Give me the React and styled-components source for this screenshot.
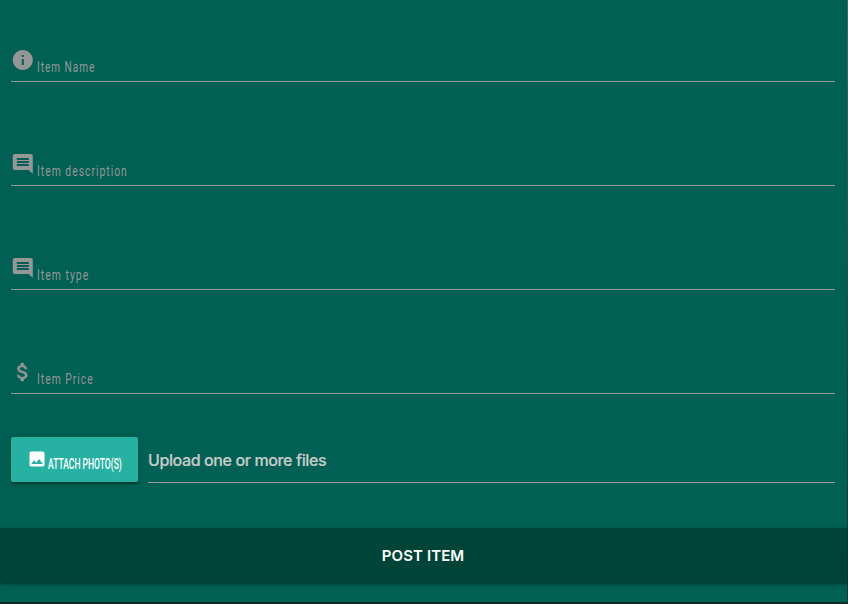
import React from 'react';
import styled, { createGlobalStyle } from 'styled-components';

const GlobalStyle = createGlobalStyle`
  * { box-sizing: border-box; }
  html, body { margin: 0; padding: 0; background: #0b2d25; overflow: hidden; }
`;

const Page = styled.div`
  width: 848px;
  height: 604px;
  background: linear-gradient(#42685f 0, #174a3f 350px, #04382e 604px);
`;

const Panel = styled.form`
  width: 847px;
  height: 602px;
  background: #006053;
  display: flex;
  flex-direction: column;
  box-shadow: 0 2px 0 #0b2d25;
`;

const Field = styled.label`
  height: ${(p) => (p.$first ? 82 : 104)}px;
  margin: 0 12px 0 11px;
  padding-bottom: 8px;
  border-bottom: 1px solid #969696;
  display: flex;
  align-items: flex-end;
  color: #969696;
`;

const Icon = styled.svg`
  width: ${(p) => p.$size}px;
  height: ${(p) => p.$size}px;
  fill: currentColor;
  flex: none;
  display: block;
`;

const FieldIcon = styled(Icon)`
  margin-bottom: 1px;
  stroke: currentColor;
  stroke-width: ${(p) => (p.$bold ? 0.4 : 0)};
`;

const Narrow = styled.span`
  display: block;
  width: ${(p) => p.$width}px;
  font: ${(p) => p.$weight || 400} ${(p) => p.$size || 15.5}px/18px Roboto, sans-serif;
  letter-spacing: ${(p) => p.$spacing ?? 1.5}px;
  white-space: nowrap;
  transform: scaleX(${(p) => p.$scale});
  transform-origin: left center;
`;

const FieldLabel = styled(Narrow)`
  margin: 0 0 -3px 2px;
`;

const UploadRow = styled.div`
  display: flex;
  height: 46px;
  margin: 43px 12px 0 11px;
  gap: 10px;
`;

const AttachButton = styled.button`
  width: 127px;
  height: 45px;
  padding: 0 0 0 16px;
  border: 0;
  border-radius: 2px;
  background: #26b1a2;
  color: #fff;
  display: flex;
  align-items: center;
  gap: 1px;
  box-shadow: 0 2px 2px rgba(0, 0, 0, 0.18), 0 3px 1px -2px rgba(0, 0, 0, 0.16), 0 1px 5px rgba(0, 0, 0, 0.2);
  ${Icon} { margin-bottom: 1px; }
  ${Narrow} { margin-top: 9px; text-align: left; }
`;

const FilePath = styled.div`
  flex: 1;
  border-bottom: 1px solid #969696;
  color: #c8cbca;
  font: 500 16px/46px Inter, sans-serif;
  letter-spacing: -0.39px;
  -webkit-text-stroke: 0.2px currentColor;
`;

const SubmitButton = styled.button`
  margin-top: 45px;
  width: 847px;
  height: 55px;
  padding: 0;
  border: 0;
  border-radius: 2px;
  background: #004437;
  color: #fff;
  font: 600 15px/55px Inter, sans-serif;
  letter-spacing: 0.1px;
  text-align: center;
  text-indent: -1px;
  box-shadow: 0 2px 2px rgba(0, 0, 0, 0.14), 0 3px 1px -2px rgba(0, 0, 0, 0.12), 0 1px 5px rgba(0, 0, 0, 0.2);
`;

const COMMENT = 'M21.99 4c0-1.1-.89-2-1.99-2H4c-1.1 0-2 .9-2 2v12c0 1.1.9 2 2 2h14l4 4-.01-18zM18 14H6v-2h12v2zm0-3H6V9h12v2zm0-3H6V6h12v2z';
const INFO = 'M12 2C6.48 2 2 6.48 2 12s4.48 10 10 10 10-4.48 10-10S17.52 2 12 2zm1 15h-2v-6h2v6zm0-8h-2V7h2v2z';
const DOLLAR = 'M11.8 10.9c-2.27-.59-3-1.2-3-2.15 0-1.09 1.01-1.85 2.7-1.85 1.78 0 2.44.85 2.5 2.1h2.21c-.07-1.72-1.12-3.3-3.21-3.81V3h-3v2.16c-1.94.42-3.5 1.68-3.5 3.61 0 2.31 1.91 3.46 4.7 4.13 2.5.6 3 1.48 3 2.41 0 .69-.49 1.79-2.7 1.79-2.06 0-2.87-.92-2.98-2.1h-2.2c.12 2.19 1.76 3.42 3.68 3.83V21h3v-2.15c1.95-.37 3.5-1.5 3.5-3.55 0-2.84-2.43-3.81-4.7-4.4z';
const PHOTO = 'M21 19V5c0-1.1-.9-2-2-2H5c-1.1 0-2 .9-2 2v14c0 1.1.9 2 2 2h14c1.1 0 2-.9 2-2zM8.5 13.5l2.5 3.01L14.5 12l4.5 6H5l3.5-4.5z';

const fields = [
  { label: 'Item Name', icon: INFO, width: 58, scale: 0.65 },
  { label: 'Item description', icon: COMMENT, width: 91, scale: 0.668 },
  { label: 'Item type', icon: COMMENT, width: 52, scale: 0.672 },
  { label: 'Item Price', icon: DOLLAR, width: 57, scale: 0.667 },
];

export default function App() {
  return (
    <>
      <GlobalStyle />
      <Page>
        <Panel>
          {fields.map((f, i) => (
            <Field key={f.label} $first={i === 0}>
              <FieldIcon $size={24} $bold={f.icon === DOLLAR} viewBox="0.2 0 24 24"><path d={f.icon} /></FieldIcon>
              <FieldLabel $width={f.width} $scale={f.scale}>{f.label}</FieldLabel>
            </Field>
          ))}
          <UploadRow>
            <AttachButton type="button">
              <Icon $size={20} viewBox="0 0 24 24"><path d={PHOTO} /></Icon>
              <Narrow $width={74} $size={14} $spacing={0} $scale={0.61} $weight={500}>ATTACH PHOTO(S)</Narrow>
            </AttachButton>
            <FilePath>Upload one or more files</FilePath>
          </UploadRow>
          <SubmitButton type="button">POST ITEM</SubmitButton>
        </Panel>
      </Page>
    </>
  );
}
